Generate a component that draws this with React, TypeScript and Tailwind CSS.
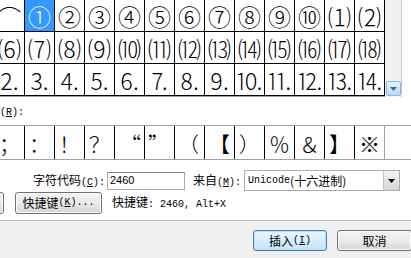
const row1 = ["⌒", "①", "②", "③", "④", "⑤", "⑥", "⑦", "⑧", "⑨", "⑩", "⑴", "⑵"];
const row2 = ["⑹", "⑺", "⑻", "⑼", "⑽", "⑾", "⑿", "⒀", "⒁", "⒂", "⒃", "⒄", "⒅"];
const row3 = ["⒉", "⒊", "⒋", "⒌", "⒍", "⒎", "⒏", "⒐", "⒑", "⒒", "⒓", "⒔", "⒕"];

// recently used symbols, with how each glyph sits inside its cell
const recent: { c: string; align: string }[] = [
    { c: "；", align: "justify-center" },
    { c: "：", align: "justify-center" },
    { c: "！", align: "justify-center" },
    { c: "？", align: "justify-center" },
    { c: "“", align: "justify-end pr-[3px]" },
    { c: "”", align: "justify-start pl-[3px]" },
    { c: "（", align: "justify-end pr-[5px]" },
    { c: "【", align: "justify-center" },
    { c: "）", align: "justify-center" },
    { c: "％", align: "justify-center" },
    { c: "＆", align: "justify-center" },
    { c: "】", align: "justify-center" },
    { c: "※", align: "justify-center" },
];

const cjk = "font-['Noto_Sans_CJK_SC',sans-serif]";
const mono = "font-['Liberation_Mono','Noto_Sans_CJK_SC',monospace] text-[10px]";

function Key({ k }: { k: string }) {
    return (
        <span className={mono}>
            (<span className="underline">{k}</span>)
        </span>
    );
}

function DownArrow({ color = "#000" }: { color?: string }) {
    return (
        <svg width="7" height="4" viewBox="0 0 7 4">
            <path d="M0 0h7L3.5 4z" fill={color} />
        </svg>
    );
}

function WinButton({ children, className = "", primary = false }: { children: React.ReactNode; className?: string; primary?: boolean }) {
    return (
        <div
            className={`shrink-0 flex items-center justify-center rounded-[3px] border bg-gradient-to-b ${
                primary
                    ? "border-[#3c7fb1] from-[#eaf6fd] to-[#c7e4f7] shadow-[inset_0_0_0_1px_#b7e3f9]"
                    : "border-[#707070] from-[#f2f2f2] via-[#ebebeb] to-[#d5d5d5] shadow-[inset_0_0_0_1px_#fcfcfc]"
            } ${className}`}
        >
            {children}
        </div>
    );
}

export default function App() {
    return (
        <div className={`w-[411px] h-[258px] overflow-hidden bg-white text-black flex flex-col ${cjk}`}>
            {/* symbol grid + scrollbar */}
            <div className="flex h-[97px] shrink-0">
                <div className="-ml-[5px] border-b border-[#a0a0a0]">
                    {[row1, row2, row3].map((row, r) => (
                        <div key={r} className="flex">
                            {row.map((c, i) => {
                                const selected = r === 0 && i === 1;
                                return (
                                    <div
                                        key={i}
                                        className={`w-[30px] h-[32px] border-r border-b border-black flex items-center justify-center text-[23px] font-light leading-[30px] ${
                                            selected ? "bg-[#3399ff] text-white" : ""
                                        }`}
                                    >
                                        {c}
                                    </div>
                                );
                            })}
                        </div>
                    ))}
                </div>
                <div className="w-[17px] h-[97px] bg-[#f0f0f0] border-r border-[#c9c9c9] flex flex-col justify-end items-center pb-[1px]">
                    <div className="w-[15px] h-[15px] rounded-[2px] border border-[#8cb7e0] bg-gradient-to-b from-[#e6f2fc] to-[#bcdcf6] flex items-center justify-center">
                        <DownArrow color="#4d6185" />
                    </div>
                </div>
            </div>

            {/* recently used */}
            <div className="mt-[8px] h-[14px] flex items-center">
                <Key k="R" />
                <span className={mono}>:</span>
            </div>
            <div className="mt-[6px] -ml-[5px] flex h-[35px] border-y border-[#a0a0a0] shrink-0">
                {recent.map((s, i) => (
                    <div
                        key={i}
                        className={`w-[30px] h-full flex items-center text-[21px] font-light leading-[30px] ${s.align} ${
                            i === recent.length - 1 ? "border-r border-[#a0a0a0]" : "border-r border-black"
                        }`}
                    >
                        {s.c}
                    </div>
                ))}
            </div>

            {/* character code row */}
            <div className="mt-[10px] h-[21px] flex items-center shrink-0">
                <div className="w-[105px] text-right text-[12px] leading-none">
                    字符代码<Key k="C" />
                    <span className={mono}>:</span>
                </div>
                <div className="ml-[2px] w-[78px] h-[18px] border border-[#abadb3] border-t-[#7a7a7a] flex items-center pl-[2px] font-['Liberation_Sans',sans-serif] text-[11px]">
                    2460
                </div>
                <div className="ml-[8px] text-[12px] leading-none">
                    来自<Key k="M" />
                    <span className={mono}>:</span>
                </div>
                <div className="ml-[3px] w-[156px] h-[21px] border border-[#abadb3] flex items-center">
                    <div className="flex-1 pl-[3px] flex items-center text-[12px] leading-none">
                        <span className={mono}>Unicode</span>(十六进制)
                    </div>
                    <div className="w-[16px] h-[19px] border-l border-[#c0c0c0] bg-gradient-to-b from-[#f4f4f4] to-[#d6d6d6] flex items-center justify-center">
                        <DownArrow />
                    </div>
                </div>
            </div>

            {/* shortcut row */}
            <div className="mt-[1px] h-[22px] flex items-center shrink-0">
                <WinButton className="w-[40px] h-[22px] -ml-[36px]">{""}</WinButton>
                <WinButton className="ml-[11px] w-[87px] h-[22px] text-[12px] leading-none">
                    快捷键<Key k="K" />
                    <span className={mono}>...</span>
                </WinButton>
                <div className="ml-[10px] text-[12px] leading-none whitespace-nowrap">
                    快捷键<span className={mono}>: 2460, Alt+X</span>
                </div>
            </div>

            {/* bottom buttons */}
            <div className="mt-[6px] flex-1 border-t border-[#b9b9b9] bg-[#f0f0f0] flex items-start pt-[9px] pl-[253px]">
                <WinButton primary className="w-[74px] h-[21px] text-[12px] leading-none">
                    插入<Key k="I" />
                </WinButton>
                <WinButton className="ml-[10px] w-[75px] h-[21px] text-[12px] leading-none">取消</WinButton>
            </div>
        </div>
    );
}
